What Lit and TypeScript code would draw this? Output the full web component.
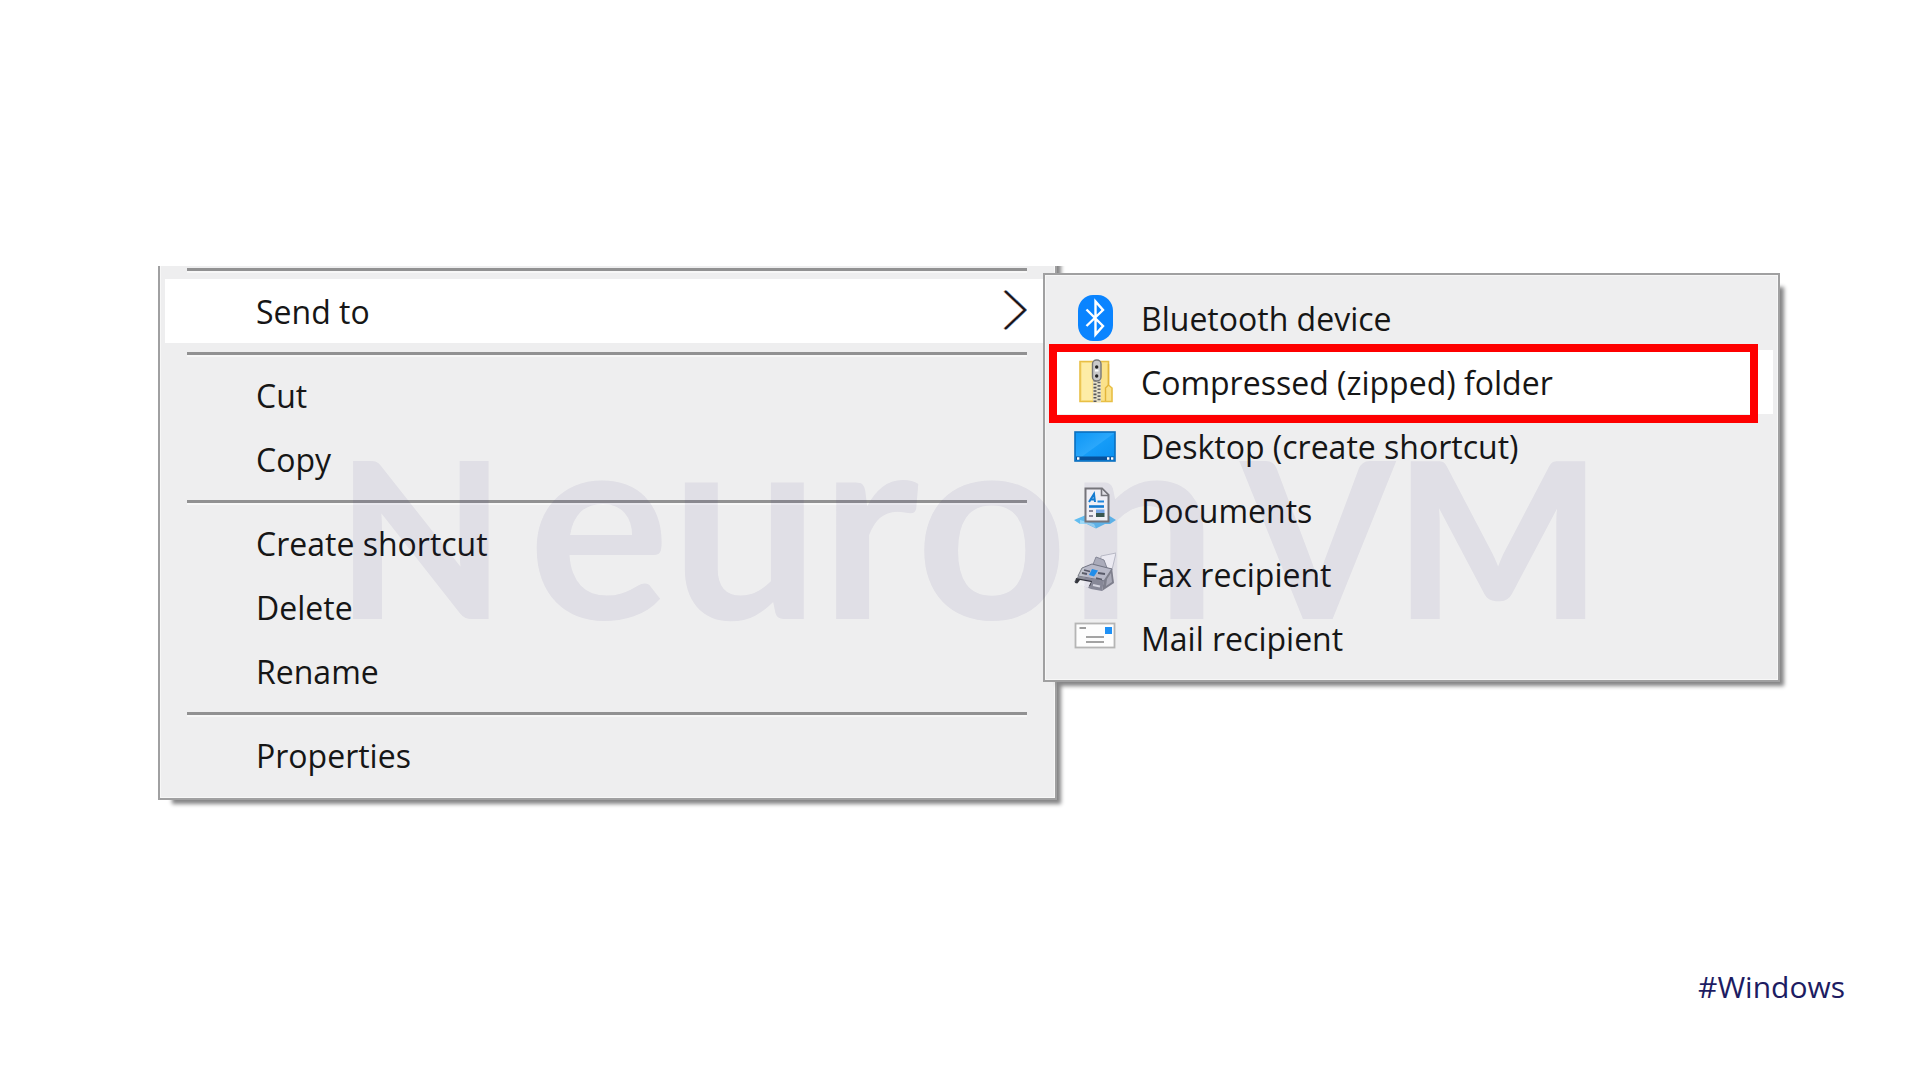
import { LitElement, html, css, svg, nothing, TemplateResult } from "lit";
import { customElement } from "lit/decorators.js";
import { classMap } from "lit/directives/class-map.js";

interface SendTarget {
  label: string;
  icon: TemplateResult;
  marked?: boolean;
}

const bluetooth = svg`
  <rect x="4" y="1" width="35" height="46" rx="15" ry="16" fill="#0a84ff"/>
  <path d="M12.500 15.500 L29 32 L21.500 40.500 V7.500 L29 16 L12.500 32" fill="none" stroke="#fff" stroke-width="2.400"/>`;

const zipped = svg`
  <path d="M6 3.500 H34.500 V27 L38 30 V43.500 H6 Z" fill="#fbe28a" stroke="#e8bf45" stroke-width="1.600"/>
  <path d="M8 5 H18 V42 H8 Z" fill="#fdeca6"/>
  <path d="M34.500 6 V27 L31.500 30 V43" fill="none" stroke="#e3b53a" stroke-width="1.400"/>
  <rect x="19" y="20" width="8" height="24" fill="#e6e0c8"/>
  <path d="M21 22 V44" stroke="#555" stroke-width="3" stroke-dasharray="1.600 1.800"/>
  <path d="M25 23.700 V44" stroke="#666" stroke-width="3" stroke-dasharray="1.600 1.800"/>
  <rect x="18.500" y="2" width="8.500" height="21" rx="4" fill="#c9c9c9" stroke="#777" stroke-width="1.400"/>
  <circle cx="22.700" cy="9" r="1.700" fill="#222"/>
  <circle cx="22.700" cy="18" r="1.700" fill="#222"/>
  <path d="M21 12.500 H24.500" stroke="#fff" stroke-width="2"/>`;

const desktop = svg`
  <defs>
    <linearGradient id="screen" x1="0" y1="0" x2="1" y2="1">
      <stop offset="0" stop-color="#0d96f5"/><stop offset="0.500" stop-color="#2aa7fb"/>
      <stop offset="0.520" stop-color="#159cf8"/><stop offset="1" stop-color="#0a90f0"/>
    </linearGradient>
  </defs>
  <rect x="1" y="10" width="40" height="29" fill="url(#screen)" stroke="#0b6fbf" stroke-width="1.600"/>
  <rect x="2" y="34.500" width="38" height="3.500" fill="#07509a"/>
  <path d="M3 36.500 h2.400 M33 36.500 h2.400 M37 36.500 h2.400" stroke="#fff" stroke-width="2.400"/>`;

const documents = svg`
  <path d="M0 34 L12 29 H34 L42 34 L36 38 H31 L22 42.500 L13 38 H6 Z" fill="#62bdf0"/>
  <path d="M6 34 L20 38 L22 42 L13 38 H6 Z" fill="#9bd9f8"/>
  <path d="M11.500 2.500 H28 L34.500 9 V35.500 H11.500 Z" fill="#fff" stroke="#7c7c7c" stroke-width="2"/>
  <path d="M27.500 3 V9.500 H34" fill="#eee" stroke="#7c7c7c" stroke-width="1.600"/>
  <path d="M15 16 L20 8 L21 16 M17 13.500 H21" fill="none" stroke="#1382d8" stroke-width="2"/>
  <path d="M23.500 15.500 H30" stroke="#1e90e6" stroke-width="2"/>
  <path d="M15 20.500 H30" stroke="#1382d8" stroke-width="2.600"/>
  <path d="M15 25 H19 M15 30 H19" stroke="#8f8f9c" stroke-width="1.800"/>
  <rect x="22" y="23.500" width="8.500" height="4" fill="#7fb2f2"/>
  <rect x="22" y="27" width="8.500" height="4" fill="#3d5d50"/>`;

const fax = svg`
  <path d="M27 6 L42 3 L37 24 L26 19 Z" fill="#fafafc" stroke="#c3c5cc" stroke-width="1"/>
  <path d="M18 17 L22 7 L30 10 L33 18 L29 22 Z" fill="#b4b7c0" stroke="#8d909a" stroke-width="1"/>
  <path d="M8 18 L18 14 L38 19 L31 31 L4 26 Z" fill="#c3c6cf" stroke="#777a84" stroke-width="1"/>
  <path d="M30 30 L38 18 L40 33 L28 41 Z" fill="#85878f"/>
  <path d="M33 29 L37 23 L38 32 L32 36 Z" fill="#b3b5bd"/>
  <path d="M4 26 L30 31 L28 41 L17 39 L0 32 Z" fill="#8f919b"/>
  <path d="M2 28 L18 31 L16 36 L1 33 Z" fill="#34363d"/>
  <path d="M6 30 L17 32 L14 38 L3 34 Z" fill="#f1f1f4"/>
  <path d="M10 20 L16 21.500 M8 23 L13 24 M24 23 L31 24 M22 28 L28 29.500" stroke="#5d6069" stroke-width="1.800"/>
  <path d="M15 25 L18 19 L24 20.500 L20 26.500 Z" fill="#2196f3"/>
  <path d="M19 35 L26 36.500" stroke="#e2e3e8" stroke-width="2"/>`;

const mail = svg`
  <rect x="1.500" y="9.500" width="39" height="24" fill="#fdfdfd" stroke="#b5b5b5" stroke-width="1.800"/>
  <rect x="31" y="13" width="7" height="7" fill="#1e90f5"/>
  <path d="M5.500 14 H12" stroke="#9d9d9d" stroke-width="2"/>
  <path d="M12 23 H30 M12 28 H30" stroke="#a3a3a3" stroke-width="2"/>`;

const targets: SendTarget[] = [
  { label: "Bluetooth device", icon: bluetooth },
  { label: "Compressed (zipped) folder", icon: zipped, marked: true },
  { label: "Desktop (create shortcut)", icon: desktop },
  { label: "Documents", icon: documents },
  { label: "Fax recipient", icon: fax },
  { label: "Mail recipient", icon: mail },
];

/* Each inner list is one group; groups are divided by a rule. */
const groups: string[][] = [
  ["Send to"],
  ["Cut", "Copy"],
  ["Create shortcut", "Delete", "Rename"],
  ["Properties"],
];

const menuStyles = css`
  :host {
    display: block;
    font-family: "Open Sans", "Noto Sans", sans-serif;
  }
  .panel {
    box-sizing: border-box;
    background: #eeeeef;
    border: 2px solid #a0a0a1;
    box-shadow: inset 0 0 0 1px #f7f7f7, 9px 9px 4px -5px #858586;
  }
  .item {
    box-sizing: border-box;
    display: flex;
    align-items: center;
    width: 100%;
    height: 64px;
    margin: 0;
    border: 0;
    background: none;
    color: #161616;
    font: inherit;
    font-size: 32px;
    line-height: 60px;
    text-align: left;
    white-space: nowrap;
  }
  .label {
    padding-top: 2px;
  }
  .active,
  .item:hover {
    background: #fff;
  }
`;

@customElement("context-menu")
class ContextMenu extends LitElement {
  static styles = [
    menuStyles,
    css`
      .panel {
        margin-top: -20px;
        padding: 20px 5px 11px;
        clip-path: inset(20px -20px -20px 0);
      }
      .item {
        padding: 0 23px 0 91px;
      }
      .rule {
        height: 3px;
        margin: 9px 23px 8px 22px;
        border: 0;
        background: #919192;
        box-shadow: 0 2px 0 #f7f7f7;
      }
      .rule:first-child {
        margin-top: 0;
      }
      .arrow {
        margin-left: auto;
        width: 24px;
        height: 42px;
      }
    `,
  ];

  render() {
    return html`<div class="panel" role="menu">
      ${groups.map(
        (group) => html`<hr class="rule" />
          ${group.map((label) => {
            const open = label === "Send to";
            return html`<button
              class=${classMap({ item: true, active: open })}
              role="menuitem"
              type="button"
            >
              <span class="label">${label}</span>
              ${open
                ? html`<svg class="arrow" viewBox="0 0 24 42" fill="none" aria-hidden="true">
                    <path d="M1 1 L21 20 L1 39" stroke="#f0a560" stroke-width="2" />
                    <path d="M3 1 L23 20 L3 39" stroke="#4a9be8" stroke-width="2" />
                    <path d="M2 1 L22 20 L2 39" stroke="#1c0f18" stroke-width="2" />
                  </svg>`
                : nothing}
            </button>`;
          })}`
      )}
    </div>`;
  }
}

@customElement("send-to-menu")
class SendToMenu extends LitElement {
  static styles = [
    menuStyles,
    css`
      .panel {
        padding: 11px 5px 10px 6px;
      }
      .row {
        position: relative;
      }
      .item {
        gap: 25px;
        padding: 0 23px;
      }
      .icon {
        flex: none;
        width: 42px;
        height: 48px;
      }
      .marker {
        position: absolute;
        top: -6px;
        right: 15px;
        bottom: -9px;
        left: -2px;
        border: 8px solid #fe0000;
        pointer-events: none;
      }
    `,
  ];

  render() {
    return html`<div class="panel" role="menu">
      ${targets.map(
        (t) => html`<div class="row">
          <button
            class=${classMap({ item: true, active: !!t.marked })}
            role="menuitem"
            type="button"
          >
            <svg class="icon" viewBox="0 0 42 48" aria-hidden="true">${t.icon}</svg>
            <span class="label">${t.label}</span>
          </button>
          ${t.marked ? html`<div class="marker"></div>` : nothing}
        </div>`
      )}
    </div>`;
  }
}

@customElement("app-root")
class AppRoot extends LitElement {
  static styles = css`
    :host {
      display: block;
      background: #fff;
    }
    .page {
      box-sizing: border-box;
      display: flex;
      flex-direction: column;
      min-height: 100vh;
      padding: 266px 75px 73px 158px;
      font-family: "Open Sans", "Noto Sans", sans-serif;
    }
    .stage {
      position: relative;
      display: grid;
      grid-template-columns: 885fr 737fr;
      align-items: start;
      margin-right: 65px;
    }
    .main {
      margin-right: -14px;
    }
    .sub {
      position: relative;
      margin-top: 7px;
    }
    .watermark {
      position: absolute;
      top: 150px;
      left: 11%;
      right: 11%;
      display: flex;
      justify-content: space-between;
      align-items: baseline;
      color: rgba(27, 20, 100, 0.066);
      font-family: Lato, sans-serif;
      font-weight: 700;
      line-height: 200px;
      pointer-events: none;
    }
    .caps {
      font-size: 218px;
      font-weight: 900;
    }
    .small {
      font-size: 266px;
    }
    .tag {
      margin-top: auto;
      align-self: flex-end;
      color: #1d1c62;
      font-size: 30px;
      line-height: 40px;
      text-decoration: none;
    }
  `;

  render() {
    return html`<main class="page">
      <div class="stage">
        <context-menu class="main"></context-menu>
        <send-to-menu class="sub"></send-to-menu>
        <div class="watermark" aria-hidden="true">
          <span class="caps">N</span><span class="small">euron</span><span class="caps">VM</span>
        </div>
      </div>
      <a class="tag" href="#Windows">#Windows</a>
    </main>`;
  }
}
